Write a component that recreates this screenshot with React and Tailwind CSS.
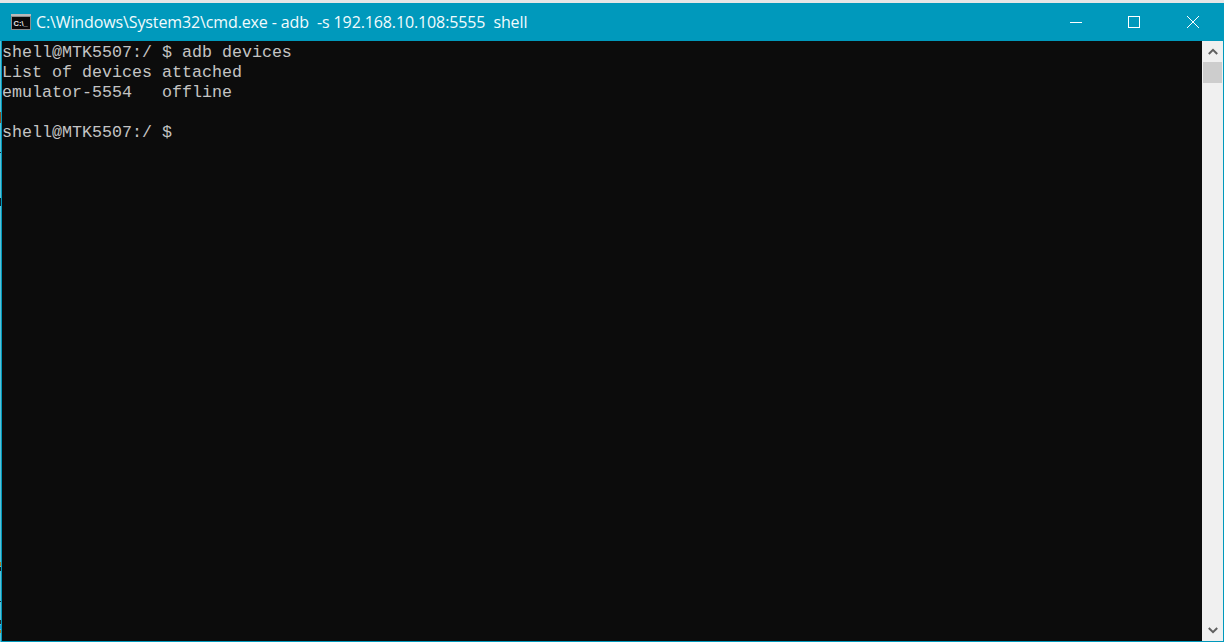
const LINES = [
  'shell@MTK5507:/ $ adb devices',
  'List of devices attached',
  'emulator-5554   offline',
  '',
  'shell@MTK5507:/ $',
];

// bits of the window behind, showing at the very left edge
const EDGE_MARKS = [
  'top-[112px] h-[11px] bg-[#8a4a1c]',
  'top-[152px] h-[1px] bg-[#1a2a33]',
  'top-[198px] h-[8px] bg-[#10222c]',
  'top-[562px] h-[4px] bg-[#b07a20]',
  'top-[567px] h-[4px] bg-[#1a1a1a]',
  'top-[601px] h-[1px] bg-[#1a2a33]',
  'top-[620px] h-[4px] bg-[#2a2a2a]',
  'top-[625px] h-[4px] bg-[#1ba0e0]',
  'top-[630px] h-[3px] bg-[#b07a20]',
];

function ConsoleIcon() {
  return (
    <svg width="20" height="16" viewBox="0 0 20 16" className="shrink-0">
      <rect x="0" y="0" width="20" height="16" fill="#8c8c8c" />
      <rect x="0" y="0" width="20" height="2" fill="#b9b9b9" />
      <rect x="1" y="3" width="18" height="12" fill="#0a0a0a" />
      <text x="2.5" y="11.5" fontSize="7.5" fontWeight="700" fontFamily="'Liberation Sans', sans-serif" fill="#e6e6e6">C:\_</text>
    </svg>
  );
}

function WindowButton({ children, className = 'w-[58px]' }) {
  return <div className={`${className} h-full flex items-center justify-center`}>{children}</div>;
}

function ScrollArrow({ up }) {
  return (
    <svg width="10" height="7" viewBox="0 0 10 7">
      <path d={up ? 'M0.8 6 L5 1.8 L9.2 6' : 'M0.8 1 L5 5.2 L9.2 1'} fill="none" stroke="#606060" strokeWidth="2" />
    </svg>
  );
}

export default function App() {
  return (
    <div className="relative w-[1224px] h-[642px] flex flex-col overflow-hidden bg-[#0c0c0c]">
      <div className="h-[3px] bg-[#e6e6e6]" />
      <div className="flex-1 min-h-0 flex flex-col border-l-2 border-r border-b border-[#0099bc]">
        <div className="h-[38px] bg-[#0099bc] flex items-center pl-[9px]">
          <ConsoleIcon />
          <span className="ml-[5px] text-[16px] whitespace-pre text-[#f2fbfd] font-['Open_Sans','Liberation_Sans',sans-serif] tracking-[-0.12px]">
            {'C:\\Windows\\System32\\cmd.exe - adb  -s 192.168.10.108:5555  shell'}
          </span>
          <div className="ml-auto h-full flex">
            <WindowButton>
              <div className="w-3 h-px bg-white" />
            </WindowButton>
            <WindowButton>
              <div className="w-3 h-3 border border-white" />
            </WindowButton>
            <WindowButton className="w-[60px]">
              <svg width="12" height="12" viewBox="0 0 12 12">
                <path d="M0 0 L12 12 M12 0 L0 12" stroke="#ffffff" strokeWidth="1" />
              </svg>
            </WindowButton>
          </div>
        </div>
        <div className="flex-1 min-h-0 flex">
          <div className="flex-1 pt-[2px] font-['Liberation_Mono',monospace] text-[16.67px] leading-[20px] text-[#c4c4c4] whitespace-pre">
            {LINES.map((line, i) => (
              <div key={i} className="h-5">{line}</div>
            ))}
          </div>
          <div className="w-[21px] bg-[#f0f0f0] flex flex-col items-center">
            <div className="h-[21px] flex items-center justify-center">
              <ScrollArrow up />
            </div>
            <div className="w-[19px] h-[21px] bg-[#cdcdcd]" />
            <div className="mt-auto h-[21px] flex items-center justify-center">
              <ScrollArrow />
            </div>
          </div>
        </div>
      </div>
      <div className="absolute left-0 top-[41px] bottom-0 w-px bg-[#5cc0d6]" />
      {EDGE_MARKS.map((mark) => (
        <div key={mark} className={`absolute left-0 w-px ${mark}`} />
      ))}
    </div>
  );
}
